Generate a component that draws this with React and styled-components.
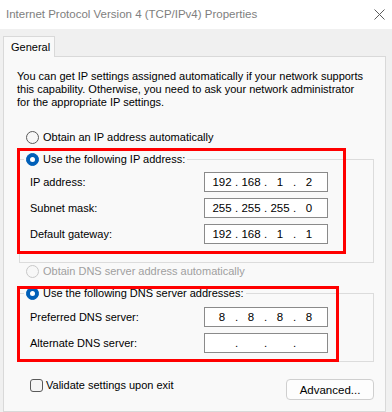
import React from 'react';
import styled, { createGlobalStyle } from 'styled-components';

const Global = createGlobalStyle`
  html, body { margin: 0; padding: 0; background: #f0f0f0; }
  body {
    font-family: "Liberation Sans", Arial, sans-serif;
    font-size: 11px;
    color: #000;
    overflow: hidden;
  }
  * { box-sizing: border-box; }
`;

const Window = styled.div`
  width: 392px;
  height: 412px;
  background: #f0f0f0;
  display: flex;
  flex-direction: column;
  overflow: hidden;
`;

const TitleBar = styled.div`
  flex: none;
  height: 29px;
  background: #fff;
  display: flex;
  align-items: center;
  justify-content: space-between;
  padding: 0 7px 1px 6px;
`;

const Title = styled.div`
  font-size: 11.5px;
  color: #7e7e7e;
`;

const TabStrip = styled.div`
  flex: none;
  display: flex;
  padding: 7px 0 0 3px;
`;

const Tab = styled.div`
  position: relative;
  z-index: 1;
  width: 52px;
  height: 21px;
  margin-bottom: -1px;
  display: flex;
  align-items: center;
  padding-left: 7px;
  background: #f9f9f9;
  border: 1px solid #d9d9d9;
  border-bottom: none;
  font-size: 11px;
`;

const Panel = styled.div`
  flex: 1;
  width: 383px;
  margin-left: 3px;
  background: #f9f9f9;
  border: 1px solid #d9d9d9;
  padding: 13px 0 0 13px;
  display: flex;
  flex-direction: column;
`;

const Intro = styled.p`
  margin: 0;
  line-height: 13px;
`;

const RadioRow = styled.div`
  display: flex;
  align-items: center;
  height: 16px;
  gap: 4px;
  padding-left: ${p => p.$indent ?? 9}px;
  margin-top: ${p => p.$top ?? 0}px;
  color: ${p => (p.$disabled ? '#a0a0a0' : '#000')};
`;

const Radio = styled.span`
  position: relative;
  flex: none;
  width: 13px;
  height: 13px;
  border-radius: 50%;
  background: ${p => (p.$checked ? '#005fb8' : '#f7f7f7')};
  border: 1px solid ${p => (p.$checked ? '#005fb8' : p.$disabled ? '#c8c8c8' : '#5a5a5a')};
  &::after {
    content: '';
    display: ${p => (p.$checked ? 'block' : 'none')};
    position: absolute;
    left: 3px;
    top: 3px;
    width: 5px;
    height: 5px;
    border-radius: 50%;
    background: #fff;
  }
`;

const Section = styled.div`
  position: relative;
  margin-top: ${p => p.$top}px;
`;

const Group = styled.fieldset`
  margin: 0 0 0 2px;
  width: 355px;
  border: 1px solid #dcdcdc;
  padding: ${p => p.$pt}px 0 ${p => p.$pb}px 0;
  min-width: 0;
`;

const Legend = styled.legend`
  margin-left: 4px;
  padding: 0 2px;
  height: 16px;
  display: flex;
  align-items: center;
  gap: 4px;
`;

const Rows = styled.div`
  display: grid;
  row-gap: 6px;
`;

const FieldRow = styled.div`
  display: flex;
  align-items: center;
  height: 20px;
  padding-left: 10px;
`;

const Label = styled.span`
  width: 174px;
  flex: none;
`;

const IpBox = styled.div`
  width: 124px;
  height: 20px;
  background: #fff;
  border: 1px solid #8a8a8a;
  display: grid;
  grid-template-columns: 22px 7px 22px 7px 22px 7px 22px;
  align-items: center;
  padding-left: 6px;
  font-size: 11.5px;
`;

const Cell = styled.span`
  text-align: center;
`;

const Highlight = styled.div`
  position: absolute;
  left: 0;
  top: ${p => p.$top}px;
  width: ${p => p.$w}px;
  height: ${p => p.$h}px;
  border: 3px solid #ff0000;
  pointer-events: none;
`;

const BottomRow = styled.div`
  display: flex;
  justify-content: space-between;
  align-items: flex-start;
  margin-top: 16px;
  padding: 0 11px 0 13px;
`;

const CheckLabel = styled.label`
  display: flex;
  align-items: center;
  gap: 3px;
  height: 14px;
`;

const Check = styled.span`
  width: 13px;
  height: 13px;
  border: 1px solid #5a5a5a;
  border-radius: 3px;
  background: #f5f5f5;
`;

const Button = styled.button`
  margin-top: 1px;
  width: 88px;
  height: 21px;
  border: 1px solid #cfcfcf;
  border-radius: 4px;
  background: #fdfdfd;
  font-family: inherit;
  font-size: 11.5px;
  color: #000;
  padding: 0;
`;

function Ip({ value }) {
  return (
    <IpBox>
      {value.map((p, i) => (
        <React.Fragment key={i}>
          <Cell>{p}</Cell>
          {i < 3 && <Cell>.</Cell>}
        </React.Fragment>
      ))}
    </IpBox>
  );
}

function CloseIcon() {
  return (
    <svg width="11" height="11" viewBox="0 0 11 11">
      <path d="M0.5 0.5 L10.5 10.5 M10.5 0.5 L0.5 10.5" stroke="#5c5c5c" strokeWidth="1" fill="none" />
    </svg>
  );
}

export default function App() {
  return (
    <>
      <Global />
      <Window>
        <TitleBar>
          <Title>Internet Protocol Version 4 (TCP/IPv4) Properties</Title>
          <CloseIcon />
        </TitleBar>
        <TabStrip>
          <Tab>General</Tab>
        </TabStrip>
        <Panel>
          <Intro>
            You can get IP settings assigned automatically if your network supports
            <br />
            this capability. Otherwise, you need to ask your network administrator
            <br />
            for the appropriate IP settings.
          </Intro>

          <RadioRow $top={20}>
            <Radio />
            Obtain an IP address automatically
          </RadioRow>

          <Section $top={6}>
            <Group $pt={5} $pb={18}>
              <Legend>
                <Radio $checked />
                Use the following IP address:
              </Legend>
              <Rows>
                <FieldRow>
                  <Label>IP address:</Label>
                  <Ip value={['192', '168', '1', '2']} />
                </FieldRow>
                <FieldRow>
                  <Label>Subnet mask:</Label>
                  <Ip value={['255', '255', '255', '0']} />
                </FieldRow>
                <FieldRow>
                  <Label>Default gateway:</Label>
                  <Ip value={['192', '168', '1', '1']} />
                </FieldRow>
              </Rows>
            </Group>
            <Highlight $top={-3} $w={329} $h={106} />
          </Section>

          <RadioRow $disabled>
            <Radio $disabled />
            Obtain DNS server address automatically
          </RadioRow>

          <Section $top={6}>
            <Group $pt={6} $pb={8}>
              <Legend>
                <Radio $checked />
                Use the following DNS server addresses:
              </Legend>
              <Rows>
                <FieldRow>
                  <Label>Preferred DNS server:</Label>
                  <Ip value={['8', '8', '8', '8']} />
                </FieldRow>
                <FieldRow>
                  <Label>Alternate DNS server:</Label>
                  <Ip value={['', '', '', '']} />
                </FieldRow>
              </Rows>
            </Group>
            <Highlight $top={1} $w={322} $h={76} />
          </Section>

          <BottomRow>
            <CheckLabel>
              <Check />
              Validate settings upon exit
            </CheckLabel>
            <Button>Advanced...</Button>
          </BottomRow>
        </Panel>
      </Window>
    </>
  );
}
